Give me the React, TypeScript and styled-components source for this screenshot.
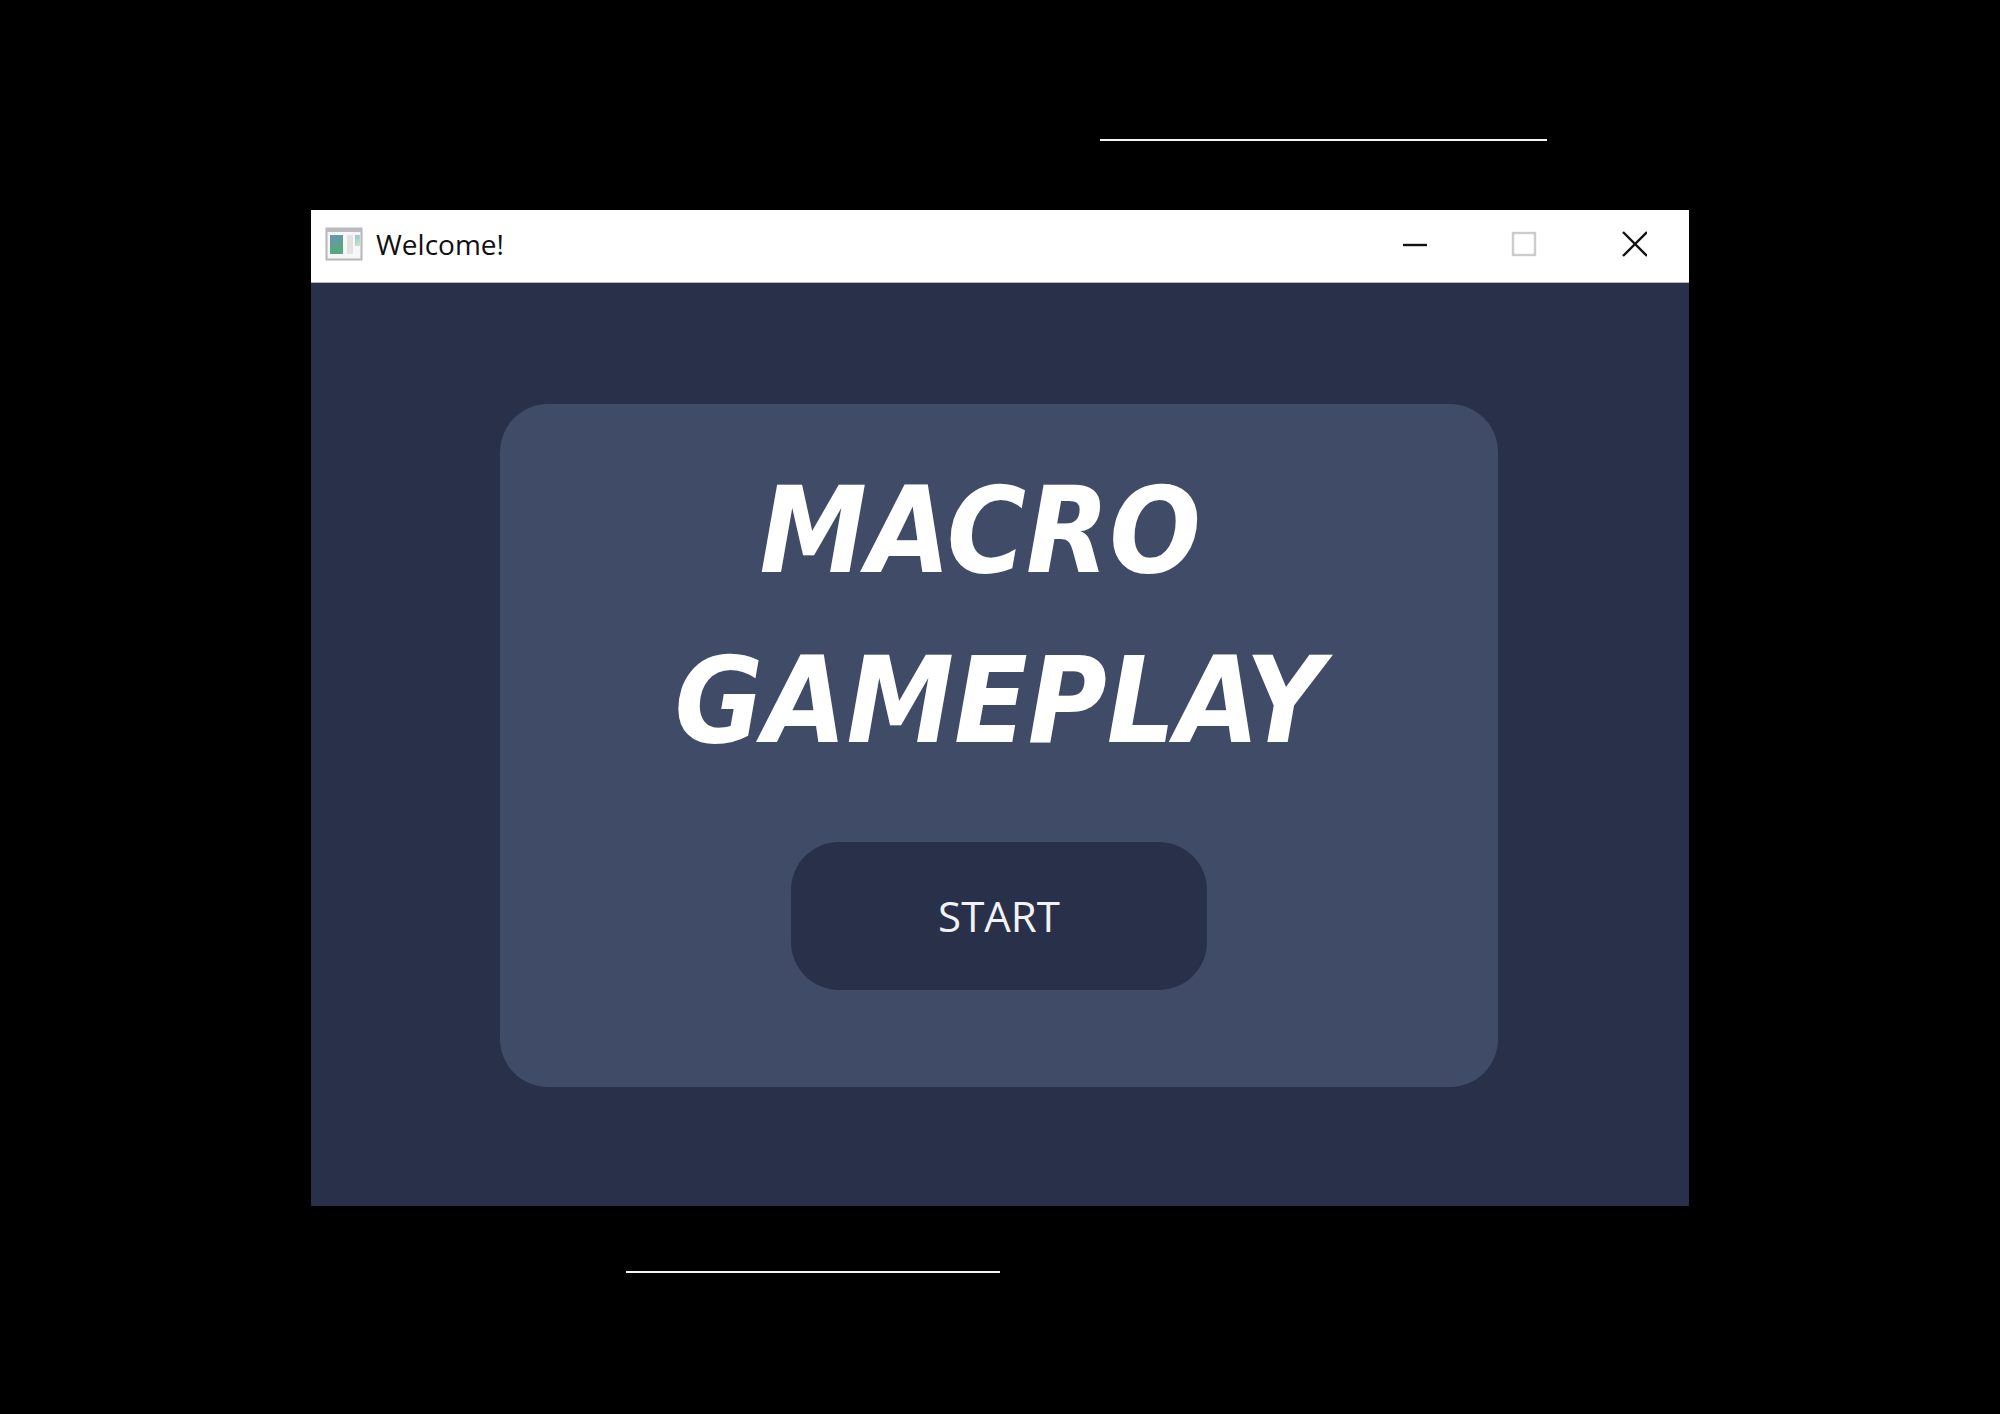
import React from "react";
import styled, { createGlobalStyle } from "styled-components";

const GlobalStyle = createGlobalStyle`
  * { box-sizing: border-box; }
  body { margin: 0; background: #000; }
`;

const sans = `"Open Sans", "Noto Sans", sans-serif`;

const Page = styled.div`
  min-height: 100vh;
  padding: 139px 0;
  display: flex;
  flex-direction: column;
  background: #000;
  font-family: ${sans};
`;

const Rule = styled.hr<{ $start: string; $width: string }>`
  width: ${(p) => p.$width};
  height: 2px;
  margin: 0 0 0 ${(p) => p.$start};
  border: 0;
  background: #f4f4f6;
`;

const Window = styled.main`
  width: 68.9%;
  margin: 69px auto 65px;
  background: #293049;
`;

const TitleBar = styled.header`
  height: 73px;
  padding-bottom: 4px;
  display: flex;
  align-items: center;
  background: #fff;
  border-bottom: 1px solid #b4b8c4;
`;

const AppIcon = styled.svg`
  width: 38px;
  height: 34px;
  margin: 0 13px 0 14px;
`;

const WindowName = styled.span`
  flex: 1;
  font-size: 28px;
  line-height: 40px;
  color: #111;
`;

const Control = styled.button`
  width: 110px;
  height: 100%;
  padding: 0;
  display: grid;
  place-items: center;
  border: 0;
  background: transparent;
  color: #111;

  &:disabled { color: #ccc; }
`;

const Glyph = styled.svg`
  width: 26px;
  height: 26px;
  fill: none;
  stroke: currentColor;
  stroke-width: 2.4;
`;

const Body = styled.section`
  padding: 121px 191px 119px 189px;
`;

const Card = styled.div`
  padding: 42px 0 97px;
  display: flex;
  flex-direction: column;
  align-items: center;
  gap: 56px;
  border-radius: 48px;
  background: #404b68;
`;

const Title = styled.h1`
  margin: 0;
  font-family: "DejaVu Sans Condensed", "DejaVu Sans", sans-serif;
  font-size: 120px;
  line-height: 170px;
  font-weight: 700;
  font-style: italic;
  text-align: center;
  color: #fff;
`;

const StartButton = styled.button`
  width: 416px;
  height: 148px;
  border: 0;
  border-radius: 48px;
  background: #293049;
  color: #f2f2f4;
  font-family: ${sans};
  font-size: 42px;
  line-height: 56px;
`;

export default function App() {
  return (
    <Page>
      <GlobalStyle />
      <Rule $start="55%" $width="447px" />
      <Window>
        <TitleBar>
          <AppIcon viewBox="0 0 38 34" aria-hidden="true">
            <defs>
              <linearGradient id="pane" x1="0" y1="0" x2="0.4" y2="1">
                <stop offset="0" stopColor="#6c93b8" />
                <stop offset="1" stopColor="#56ab78" />
              </linearGradient>
              <linearGradient id="sliver" x1="0" y1="0" x2="0.4" y2="1">
                <stop offset="0" stopColor="#9dbdd8" />
                <stop offset="1" stopColor="#c4e3c4" />
              </linearGradient>
            </defs>
            <rect x="1.5" y="1.5" width="35" height="31" fill="#f7f7f8" stroke="#b4b6ba" strokeWidth="2" />
            <rect x="1" y="1" width="36" height="4" fill="#b9bbbf" />
            <rect x="5" y="8" width="13" height="19" fill="url(#pane)" />
            <rect x="22" y="8" width="6" height="19" fill="#e2e2e3" />
            <rect x="30" y="8" width="5" height="11" fill="url(#sliver)" />
          </AppIcon>
          <WindowName>Welcome!</WindowName>
          <Control type="button" aria-label="Minimize">
            <Glyph viewBox="0 0 26 26"><path d="M2 14H26" /></Glyph>
          </Control>
          <Control type="button" aria-label="Maximize" disabled>
            <Glyph viewBox="0 0 26 26"><rect x="2" y="2" width="22" height="22" /></Glyph>
          </Control>
          <Control type="button" aria-label="Close">
            <Glyph viewBox="0 0 26 26"><path d="M2 1L26 25M26 1L2 25" /></Glyph>
          </Control>
        </TitleBar>
        <Body>
          <Card>
            <Title>
              MACRO{"\u00a0"}
              <br />
              GAMEPLAY
            </Title>
            <StartButton type="button">START</StartButton>
          </Card>
        </Body>
      </Window>
      <Rule $start="626px" $width="374px" />
    </Page>
  );
}
